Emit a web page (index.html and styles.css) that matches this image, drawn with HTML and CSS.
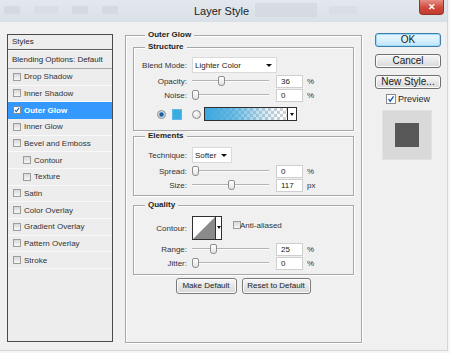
FILE: index.html
```html
<!DOCTYPE html>
<html>
<head>
<meta charset="utf-8">
<title>Layer Style</title>
<link rel="stylesheet" href="styles.css">
</head>
<body>
<div class="window">
  <div class="titlebar">
    <div class="ghosts"><span class="ghost g1"></span><span class="ghost g2"></span><span class="ghost g3"></span><span class="ghost g4"></span></div>
    <div class="title">Layer Style</div>
    <div class="tb-right"><span class="ghost g5"></span><span class="ghost g6"></span><span class="close">✕</span></div>
  </div>
  <div class="content">
    <div class="list">
      <div class="list-head">Styles</div>
      <div class="list-blend">Blending Options: Default</div>
      <div class="item"><span class="cb"></span>Drop Shadow</div>
      <div class="item"><span class="cb"></span>Inner Shadow</div>
      <div class="item sel"><span class="cb on"><svg width="8" height="8" viewBox="0 0 8 8"><path d="M1.2 4.2 L3 6.2 L6.8 1.2" fill="none" stroke="#1d5fb0" stroke-width="1.6"/></svg></span>Outer Glow</div>
      <div class="item"><span class="cb"></span>Inner Glow</div>
      <div class="item"><span class="cb"></span>Bevel and Emboss</div>
      <div class="item sub"><span class="cb"></span>Contour</div>
      <div class="item sub"><span class="cb"></span>Texture</div>
      <div class="item"><span class="cb"></span>Satin</div>
      <div class="item"><span class="cb"></span>Color Overlay</div>
      <div class="item"><span class="cb"></span>Gradient Overlay</div>
      <div class="item"><span class="cb"></span>Pattern Overlay</div>
      <div class="item"><span class="cb"></span>Stroke</div>
    </div>

    <div class="group outer">
      <div class="legend">Outer Glow</div>

      <div class="group inner structure">
        <div class="legend">Structure</div>
        <div class="row row-select">
          <span class="lbl">Blend Mode:</span>
          <div class="select sel-blend"><span class="sel-text">Lighter Color</span><span class="arr"></span></div>
        </div>
        <div class="row">
          <span class="lbl">Opacity:</span>
          <div class="slider"><span class="thumb" style="margin-left:26px"></span></div>
          <span class="num">36</span><span class="unit">%</span>
        </div>
        <div class="row">
          <span class="lbl">Noise:</span>
          <div class="slider"><span class="thumb" style="margin-left:0px"></span></div>
          <span class="num">0</span><span class="unit">%</span>
        </div>
        <div class="row row-color">
          <span class="radio on"></span>
          <span class="swatch"></span>
          <span class="radio"></span>
          <div class="gradbox"><span class="grad"></span><span class="grad-arr"><span class="arr small"></span></span></div>
        </div>
      </div>

      <div class="group inner elements">
        <div class="legend">Elements</div>
        <div class="row row-select">
          <span class="lbl">Technique:</span>
          <div class="select sel-tech"><span class="sel-text">Softer</span><span class="arr"></span></div>
        </div>
        <div class="row">
          <span class="lbl">Spread:</span>
          <div class="slider"><span class="thumb" style="margin-left:0px"></span></div>
          <span class="num">0</span><span class="unit">%</span>
        </div>
        <div class="row">
          <span class="lbl">Size:</span>
          <div class="slider"><span class="thumb" style="margin-left:36px"></span></div>
          <span class="num">117</span><span class="unit">px</span>
        </div>
      </div>

      <div class="group inner quality">
        <div class="legend">Quality</div>
        <div class="row row-contour">
          <span class="lbl">Contour:</span>
          <div class="contour">
            <svg class="curve" width="22" height="22" viewBox="0 0 22 22"><rect width="22" height="22" fill="#ffffff"/><path d="M0 22 L22 0 L22 22 Z" fill="#8a8a8a"/></svg>
            <span class="contour-arr"><span class="arr small"></span></span>
          </div>
          <span class="cb aa"></span><span class="aa-text">Anti-aliased</span>
        </div>
        <div class="row">
          <span class="lbl">Range:</span>
          <div class="slider"><span class="thumb" style="margin-left:18px"></span></div>
          <span class="num">25</span><span class="unit">%</span>
        </div>
        <div class="row">
          <span class="lbl">Jitter:</span>
          <div class="slider"><span class="thumb" style="margin-left:0px"></span></div>
          <span class="num">0</span><span class="unit">%</span>
        </div>
      </div>

      <div class="defaults">
        <span class="pbtn b-make">Make Default</span>
        <span class="pbtn b-reset">Reset to Default</span>
      </div>
    </div>

    <div class="side">
      <span class="btn ok">OK</span>
      <span class="btn">Cancel</span>
      <span class="btn">New Style...</span>
      <div class="preview-row"><span class="cb big on"><svg width="10" height="10" viewBox="0 0 10 10"><path d="M2 5.2 L4 7.8 L8.2 1.6" fill="none" stroke="#1d5fb0" stroke-width="1.7"/></svg></span><span>Preview</span></div>
      <div class="preview"><span class="pv-square"></span></div>
    </div>
  </div>
</div>
</body>
</html>
```

FILE: styles.css
```css
* { box-sizing: border-box; }
html, body { margin: 0; padding: 0; }
body {
  width: 450px;
  height: 353px;
  background: #f5f5f5;
  font-family: "Liberation Sans", Arial, sans-serif;
  font-size: 8px;
  color: #2b2b2b;
  overflow: hidden;
}
.window {
  width: 448px;
  height: 351px;
  background: #f0f0f0;
  border-right: 1px solid #d6d6d6;
  border-bottom: 1px solid #d6d6d6;
}

/* title bar */
.titlebar {
  height: 22px;
  background: linear-gradient(#e3e8ee, #dae0e7);
  display: grid;
  grid-template-columns: 1fr auto 1fr;
  align-items: start;
}
.title {
  font-size: 11px;
  line-height: 22px;
  color: #1b1b1b;
  padding-right: 4px;
}
.ghosts { display: flex; gap: 14px; padding: 6px 0 0 4px; }
.ghost { display: block; height: 8px; background: #d0d6dd; border-radius: 1px; opacity: 0.7; }
.g1 { width: 16px; }
.g2 { width: 24px; background: #d6dbe1; }
.g3 { width: 16px; }
.g4 { width: 16px; }
.tb-right { display: flex; align-items: flex-start; }
.g5 { width: 62px; height: 14px; margin: 3px 0 0 2px; background: #d2d7dd; }
.g6 { width: 28px; margin: 6px 0 0 12px; background: #d7dce2; }
.close {
  margin-left: auto;
  margin-right: 3px;
  width: 25px;
  height: 15px;
  background: linear-gradient(#e58e84, #cf4a3d 55%, #c13b2f);
  border: 1px solid #94332a;
  border-top: none;
  border-radius: 0 0 4px 4px;
  color: #ffffff;
  font-size: 9px;
  font-weight: bold;
  text-align: center;
  line-height: 14px;
}

/* layout */
.content {
  display: flex;
  align-items: flex-start;
  padding: 8px 0 0 7px;
}

/* styles list */
.list {
  width: 106px;
  height: 308px;
  margin-top: 4px;
  border: 1px solid #4b4b4b;
  background: #ededed;
}
.list-head {
  height: 15px;
  line-height: 13px;
  padding-left: 4px;
  border-bottom: 1px solid #5a5a5a;
  box-shadow: 0 1px 0 #fafafa;
}
.list-blend {
  height: 18px;
  line-height: 17px;
  padding-left: 4px;
  margin-top: 1px;
  border-bottom: 1px solid #a8a8a8;
}
.item {
  height: 16.67px;
  display: flex;
  align-items: center;
  padding-left: 5px;
  border-bottom: 1px solid #f9f9f9;
  color: #333;
}
.item.sub { padding-left: 15px; }
.item.sel {
  background: #3399ff;
  color: #ffffff;
  font-weight: bold;
  border-bottom-color: #3399ff;
}
.cb {
  width: 8px;
  height: 8px;
  margin-right: 3px;
  border: 1px solid #9c9c9c;
  background: linear-gradient(#d9d9d9, #f6f6f6);
  display: inline-flex;
  align-items: center;
  justify-content: center;
  flex: none;
}
.cb.on { background: #ffffff; border-color: #8a8a8a; }
.cb.big { width: 10px; height: 10px; margin-right: 2px; }

/* groups */
.group {
  border: 1px solid #a7a7a7;
  box-shadow: 1px 1px 0 #ffffff, inset 1px 1px 0 #ffffff;
}
.legend {
  width: fit-content;
  font-weight: bold;
  line-height: 10px;
  background: #f0f0f0;
  color: #1e1e1e;
}
.outer {
  width: 237px;
  height: 308px;
  margin: 5px 0 0 12px;
  padding: 0 7px;
}
.outer > .legend { margin: -6px 0 0 12px; padding: 0 3px; }
.inner > .legend { margin: -6px 0 0 11px; padding: 0 3px; }
.structure { margin-top: 7px; padding-bottom: 9px; }
.elements { margin-top: 5px; padding-bottom: 3px; }
.quality { margin-top: 9px; padding-bottom: 4px; }

.row {
  display: flex;
  align-items: center;
  height: 14px;
}
.lbl {
  width: 53px;
  margin-right: 5px;
  text-align: right;
  color: #333;
  flex: none;
}
.row-select { height: 16px; }
.structure .row-select { margin-top: 5px; margin-bottom: 1px; }
.elements .row-select { margin-top: 6px; margin-bottom: 1px; }

.select {
  height: 16px;
  background: #ffffff;
  border: 1px solid #dadada;
  display: flex;
  align-items: center;
  padding: 0 4px 0 2px;
  color: #222;
}
.sel-text { flex: 1; }
.sel-blend { width: 85px; }
.sel-tech { width: 40px; }
.arr {
  width: 0;
  height: 0;
  border-left: 3px solid transparent;
  border-right: 3px solid transparent;
  border-top: 3px solid #111;
}
.arr.small { border-left-width: 2px; border-right-width: 2px; border-top-width: 3px; }

.slider {
  width: 77px;
  height: 14px;
  display: flex;
  align-items: center;
  background: linear-gradient(to bottom, transparent 6px, #b3b3b3 6px, #b3b3b3 7px, #fbfbfb 7px, #fbfbfb 8px, transparent 8px);
}
.thumb {
  width: 7px;
  height: 10px;
  border: 1px solid #8e8e8e;
  border-radius: 2px 2px 3px 3px;
  background: linear-gradient(#ffffff, #e2e2e2);
  flex: none;
}
.num {
  width: 27px;
  height: 13px;
  margin-left: 7px;
  background: #ffffff;
  border: 1px solid #cfcfcf;
  padding-left: 4px;
  line-height: 11px;
  color: #222;
  flex: none;
}
.unit { margin-left: 4px; color: #333; }

.row-color { margin-top: 5px; padding-left: 23px; }
.radio {
  width: 9px;
  height: 9px;
  border-radius: 50%;
  border: 1px solid #8c8c8c;
  background: radial-gradient(circle at 40% 35%, #ffffff, #d6d6d6);
  flex: none;
}
.radio.on { background: radial-gradient(circle, #1f5c9c 0 1.6px, #8fbbe3 2.4px, #e8eef4 3.4px); }
.swatch {
  width: 10px;
  height: 11px;
  margin: 0 10px 0 6px;
  background: #3aade0;
  border: 1px solid #5fb9e2;
  flex: none;
}
.gradbox {
  width: 93px;
  height: 14px;
  margin-left: 3px;
  border: 1px solid #2f2f2f;
  display: flex;
  background: #ffffff;
}
.grad {
  flex: 1;
  background:
    linear-gradient(90deg, #3ba7df 0%, rgba(59,167,223,0.75) 35%, rgba(59,167,223,0.25) 70%, rgba(59,167,223,0) 95%),
    repeating-conic-gradient(#cfcfcf 0 25%, #ffffff 0 50%) 0 0 / 6px 6px;
}
.grad-arr {
  width: 9px;
  border-left: 1px solid #2f2f2f;
  display: flex;
  align-items: center;
  justify-content: center;
  background: #ffffff;
}

.row-contour { height: 24px; margin-top: 6px; margin-bottom: 2px; }
.contour {
  width: 30px;
  height: 24px;
  border: 1px solid #2f2f2f;
  display: flex;
  background: #ffffff;
  flex: none;
}
.curve { display: block; }
.contour-arr {
  flex: 1;
  border-left: 1px solid #2f2f2f;
  display: flex;
  align-items: flex-start;
  justify-content: center;
  padding-top: 9px;
}
.cb.aa { margin: -6px 0 0 11px; }
.aa-text { margin: -6px 0 0 -1px; color: #333; }

.defaults {
  display: flex;
  justify-content: center;
  gap: 5px;
  margin-top: 3px;
  padding-right: 1px;
}
.pbtn {
  height: 16px;
  border: 1px solid #7a7a7a;
  border-radius: 3px;
  background: linear-gradient(#f7f7f7, #e6e6e6 50%, #d8d8d8);
  box-shadow: inset 0 0 0 1px #fcfcfc;
  text-align: center;
  line-height: 14px;
  color: #222;
}
.b-make { width: 61px; }
.b-reset { width: 69px; }

/* right column */
.side {
  width: 66px;
  margin: 3px 0 0 13px;
  display: flex;
  flex-direction: column;
}
.btn {
  height: 14px;
  margin-bottom: 7px;
  border: 1px solid #707070;
  border-radius: 3px;
  background: linear-gradient(#f6f6f6, #e8e8e8 50%, #d9d9d9);
  box-shadow: inset 0 0 0 1px #fbfbfb;
  font-size: 10px;
  line-height: 12px;
  text-align: center;
  color: #1a1a1a;
}
.btn.ok {
  border-color: #3c7fb1;
  background: linear-gradient(#eaf6fd, #d9f0fc 50%, #bee6fd);
  box-shadow: inset 0 0 0 1px #9fdaf6;
}
.preview-row {
  display: flex;
  align-items: center;
  height: 12px;
  margin-top: -3px;
  padding-left: 11px;
  font-size: 9px;
  color: #1f1f1f;
}
.preview {
  width: 50px;
  height: 50px;
  margin: 5px 0 0 7px;
  background: #d9d9d9;
  border: 1px solid #e2e2e2;
  display: flex;
  align-items: center;
  justify-content: center;
}
.pv-square {
  width: 24px;
  height: 24px;
  background: #575757;
}
```
